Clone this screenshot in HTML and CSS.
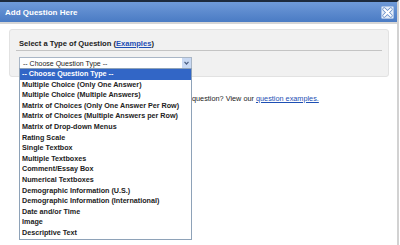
FILE: index.html
```html
<!DOCTYPE html>
<html lang="en">

<head>
    <meta charset="UTF-8">
    <title>Add Question Here</title>
    <link rel="stylesheet" href="styles.css">
</head>

<body>
    <div class="dialog">
        <div class="dialog-header">
            <span class="dialog-title">Add Question Here</span>
            <span class="close">
                <svg width="13" height="13" viewBox="0 0 13 13">
                    <rect x="0.5" y="0.5" width="12" height="12" rx="1" fill="#e4edf9" stroke="#a9c2e6" />
                    <path d="M3.2 3.2 L9.8 9.8 M9.8 3.2 L3.2 9.8" stroke="#5f87c4" stroke-width="3.6" stroke-linecap="round" />
                    <path d="M3.2 3.2 L9.8 9.8 M9.8 3.2 L3.2 9.8" stroke="#ffffff" stroke-width="2.2" stroke-linecap="round" />
                </svg>
            </span>
        </div>
        <div class="dialog-body">
            <div class="panel">
                <h3>Select a Type of Question (<a href="#">Examples</a>)</h3>
                <div class="picker">
                    <div class="select">
                        <span>-- Choose Question Type --</span>
                        <span class="arrow">
                            <svg width="5" height="4" viewBox="0 0 5 4"><path d="M0.5 0.8 L2.5 3 L4.5 0.8" fill="none" stroke="#4d6185" stroke-width="1.2" /></svg>
                        </span>
                    </div>
                    <ul class="options">
                        <li class="active">-- Choose Question Type --</li>
                        <li>Multiple Choice (Only One Answer)</li>
                        <li>Multiple Choice (Multiple Answers)</li>
                        <li>Matrix of Choices (Only One Answer Per Row)</li>
                        <li>Matrix of Choices (Multiple Answers per Row)</li>
                        <li>Matrix of Drop-down Menus</li>
                        <li>Rating Scale</li>
                        <li>Single Textbox</li>
                        <li>Multiple Textboxes</li>
                        <li>Comment/Essay Box</li>
                        <li>Numerical Textboxes</li>
                        <li>Demographic Information (U.S.)</li>
                        <li>Demographic Information (International)</li>
                        <li>Date and/or Time</li>
                        <li>Image</li>
                        <li>Descriptive Text</li>
                    </ul>
                </div>
            </div>
            <p class="hint">question? View our <a href="#">question examples.</a></p>
        </div>
    </div>
</body>

</html>
```

FILE: styles.css
```css
body {
    margin: 0;
    font-family: "Liberation Sans", Arial, sans-serif;
    background-color: #ffffff;
}

.dialog {
    width: 399px;
    height: 245px;
    border-right: 2px solid #d2d2d2;
    border-top: 2px solid #1d2a3c;
    box-sizing: border-box;
}

.dialog-header {
    height: 20px;
    padding: 0 3px 0 5px;
    display: flex;
    align-items: center;
    justify-content: space-between;
    background: linear-gradient(#6f9ad8, #4a7bc4);
    border-bottom: 2px solid #d6d6d6;
}

.dialog-title {
    color: #ffffff;
    font-size: 8px;
    font-weight: bold;
}

.close {
    display: flex;
}

.dialog-body {
    padding: 5px 8px 0 9px;
}

.panel {
    height: 46px;
    padding: 0 6px 0 6px;
    background-color: #f1f1f1;
    border: 1px solid #e2e2e2;
    border-radius: 3px;
}

.panel h3 {
    margin: 0;
    padding: 9px 0 0 3px;
    height: 11px;
    font-size: 7.6px;
    color: #222222;
    border-bottom: 1px solid #c4c4c4;
}

a {
    color: #1d4fb4;
}

.picker {
    position: relative;
    width: 173px;
    margin: 6px 0 0 3px;
}

.select {
    height: 10px;
    display: flex;
    align-items: center;
    justify-content: space-between;
    padding-left: 3px;
    background-color: #ffffff;
    border: 1px solid #a9b6c6;
    font-size: 7px;
    color: #222222;
}

.arrow {
    width: 9px;
    height: 10px;
    display: flex;
    align-items: center;
    justify-content: center;
    background-color: #c9d9f3;
}

.options {
    position: absolute;
    top: 11px;
    left: 0;
    width: 171px;
    margin: 0;
    padding: 0;
    list-style: none;
    background-color: #ffffff;
    border: 1px solid #8ea2b8;
    font-size: 7.2px;
    font-weight: bold;
    color: #222222;
    z-index: 2;
}

.options li {
    height: 10.6px;
    line-height: 10.6px;
    padding-left: 2px;
    white-space: nowrap;
}

.options li.active {
    background-color: #3266c6;
    color: #ffffff;
}

.hint {
    margin: 17px 0 0 183px;
    font-size: 7.3px;
    color: #222222;
}
```
